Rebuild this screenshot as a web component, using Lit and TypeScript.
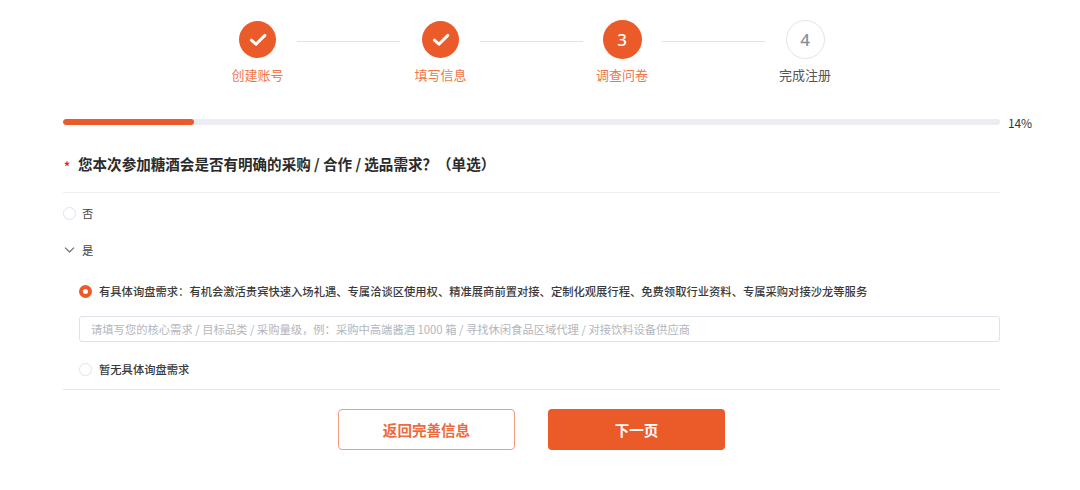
import { LitElement, html, css, svg } from "lit";
import { customElement } from "lit/decorators.js";

const check = svg`<svg width="22" height="22" viewBox="0 0 22 22" fill="none"><path d="M4.4 11.2 L9 15.2 L17.8 6.4" stroke="#fff" stroke-width="3" stroke-linecap="round" stroke-linejoin="round"/></svg>`;
const chevron = svg`<svg width="13" height="8" viewBox="0 0 13 8" fill="none"><path d="M2 1.6 L6.5 6 L11 1.6" stroke="#666" stroke-width="1.1"/></svg>`;

@customElement("app-root")
export class AppRoot extends LitElement {
  static styles = css`
    :host {
      display: block;
      width: 1080px;
      height: 490px;
      background: #fff;
      overflow: hidden;
      font-family: "Noto Sans CJK SC", "Noto Sans", sans-serif;
      color: #333;
    }
    .steps {
      display: flex;
      align-items: flex-start;
      padding: 19px 0 0 227.5px;
      height: 81px;
      box-sizing: content-box;
    }
    .step {
      width: 60px;
      display: flex;
      flex-direction: column;
      align-items: center;
    }
    .circle-wrap {
      height: 41px;
      display: flex;
      align-items: center;
      justify-content: center;
    }
    .circle {
      border-radius: 50%;
      display: flex;
      align-items: center;
      justify-content: center;
      box-sizing: border-box;
      font-family: "Noto Sans", sans-serif;
      font-size: 17px;
      font-weight: 500;
    }
    .done { width: 37px; height: 37px; background: #eb5b2a; }
    .active { width: 39px; height: 39px; background: #eb5b2a; color: #fff; }
    .todo { width: 39px; height: 39px; border: 1px solid #e4e4e4; color: #8a8f99; }
    .label {
      margin-top: 5px;
      font-size: 13px;
      line-height: 20px;
      white-space: nowrap;
      color: #f0764a;
    }
    .label.gray { color: #555; }
    .line {
      height: 1px;
      background: #e2e2e2;
      flex: none;
    }
    .l1 { width: 103px; margin: 22px 10.5px 0 9.5px; }
    .l2 { width: 103px; margin: 22px 9px 0 9.5px; }
    .l3 { width: 103px; margin: 22px 10px 0 10px; }
    .progress {
      display: flex;
      align-items: center;
      margin: 19px 0 0 63px;
      height: 6px;
    }
    .track {
      width: 937px;
      height: 6px;
      border-radius: 3px;
      background: #ebedf3;
      overflow: hidden;
    }
    .fill {
      height: 100%;
      background: #eb5b2a;
      border-radius: 3px;
    }
    .pct {
      margin-left: 8px;
      font-size: 12px;
      letter-spacing: -0.2px;
      font-family: "Noto Sans CJK SC", sans-serif;
      color: #333;
    }
    .form { margin: 0 80px 0 63px; }
    .title {
      display: flex;
      align-items: center;
      height: 68px;
      padding-top: 10px;
      border-bottom: 1px solid #eceef2;
      font-size: 14.56px;
      font-weight: 700;
      color: #2b2b2b;
      box-sizing: border-box;
    }
    .star {
      width: 15px;
      padding: 4px 0 0 1px;
      box-sizing: border-box;
      color: #e8202a;
      font-size: 12px;
      font-weight: 700;
    }
    .opt {
      display: flex;
      align-items: center;
      font-size: 11.3px;
      line-height: 16px;
      color: #444;
    }
    .radio {
      width: 13px;
      height: 13px;
      border: 1px solid #e0e3ea;
      border-radius: 50%;
      box-sizing: border-box;
      background: #fff;
      flex: none;
      margin-right: 6px;
    }
    .radio.on {
      border: 4px solid #eb5b2a;
    }
    .chev { width: 13px; margin-right: 6px; display: flex; }
    .no { margin-top: 12px; }
    .yes { margin-top: 21px; }
    .sub { margin-left: 16px; }
    .sub .radio { margin-right: 7px; }
    .sub .opt { color: #3a3a3a; font-weight: 500; white-space: nowrap; }
    .s1 { margin-top: 25px; }
    .input {
      margin-top: 17px;
      height: 26px;
      border: 1px solid #dfe2ea;
      border-radius: 3px;
      box-sizing: border-box;
      display: flex;
      align-items: center;
      padding-left: 11px;
      font-size: 11.3px;
      color: #b3b6bd;
      white-space: nowrap;
    }
    .s2 { margin-top: 19px; }
    .rule {
      margin-top: 12px;
      height: 1px;
      background: #e4e6ea;
    }
    .buttons {
      display: flex;
      gap: 33px;
      margin: 19px 0 0 275px;
    }
    .btn {
      width: 177px;
      height: 41px;
      border-radius: 4px;
      box-sizing: border-box;
      display: flex;
      align-items: center;
      justify-content: center;
      font-size: 14.56px;
      font-weight: 700;
    }
    .ghost { border: 1px solid #f79a7b; color: #ee6a3c; background: #fff; }
    .solid { background: #eb5b2a; color: #fff; }
  `;

  render() {
    return html`
      <div class="steps">
        <div class="step">
          <div class="circle-wrap"><div class="circle done">${check}</div></div>
          <div class="label">创建账号</div>
        </div>
        <div class="line l1"></div>
        <div class="step">
          <div class="circle-wrap"><div class="circle done">${check}</div></div>
          <div class="label">填写信息</div>
        </div>
        <div class="line l2"></div>
        <div class="step">
          <div class="circle-wrap"><div class="circle active">3</div></div>
          <div class="label">调查问卷</div>
        </div>
        <div class="line l3"></div>
        <div class="step">
          <div class="circle-wrap"><div class="circle todo">4</div></div>
          <div class="label gray">完成注册</div>
        </div>
      </div>
      <div class="progress">
        <div class="track"><div class="fill" style="width:14%"></div></div>
        <div class="pct">14%</div>
      </div>
      <div class="form">
        <div class="title">
          <span class="star">*</span>
          <span>您本次参加糖酒会是否有明确的采购 / 合作 / 选品需求？（单选）</span>
        </div>
        <div class="opt no"><span class="radio"></span>否</div>
        <div class="opt yes"><span class="chev">${chevron}</span>是</div>
        <div class="sub">
          <div class="opt s1">
            <span class="radio on"></span>
            有具体询盘需求：有机会激活贵宾快速入场礼遇、专属洽谈区使用权、精准展商前置对接、定制化观展行程、免费领取行业资料、专属采购对接沙龙等服务
          </div>
          <div class="input">请填写您的核心需求 / 目标品类 / 采购量级，例：采购中高端酱酒 1000 箱 / 寻找休闲食品区域代理 / 对接饮料设备供应商</div>
          <div class="opt s2"><span class="radio"></span>暂无具体询盘需求</div>
        </div>
        <div class="rule"></div>
        <div class="buttons">
          <div class="btn ghost">返回完善信息</div>
          <div class="btn solid">下一页</div>
        </div>
      </div>
    `;
  }
}
